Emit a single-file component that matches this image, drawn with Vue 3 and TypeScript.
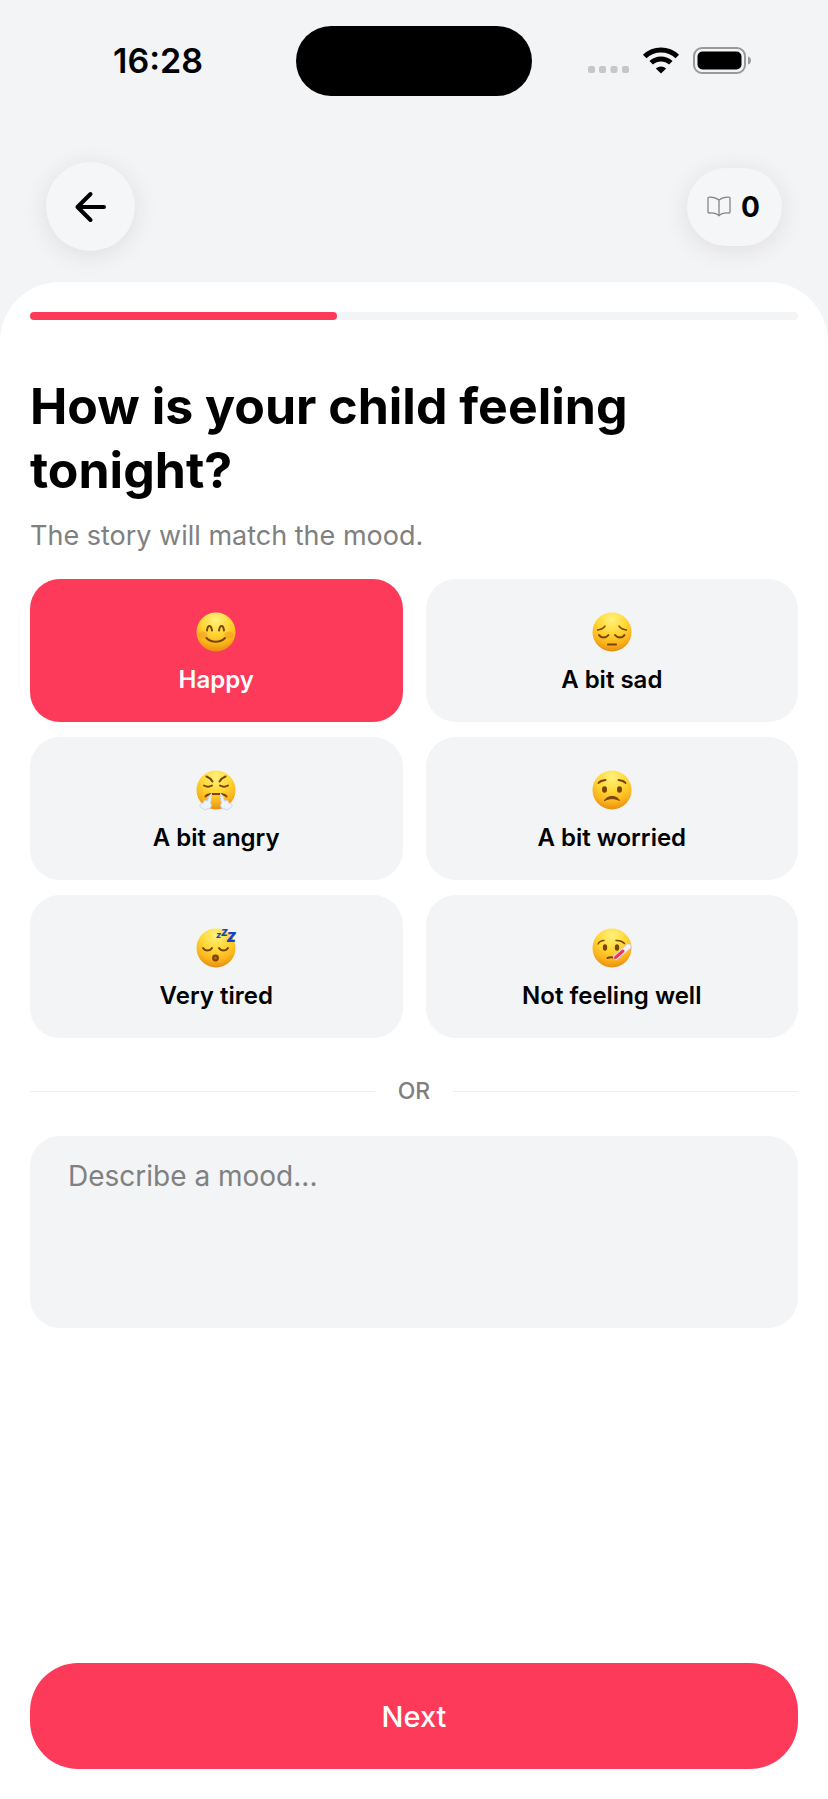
<script setup lang="ts">
import { ref } from 'vue'

type Face = 'happy' | 'sad' | 'angry' | 'worried' | 'tired' | 'sick'

interface Mood {
  id: Face
  label: string
}

const moods: Mood[] = [
  { id: 'happy', label: 'Happy' },
  { id: 'sad', label: 'A bit sad' },
  { id: 'angry', label: 'A bit angry' },
  { id: 'worried', label: 'A bit worried' },
  { id: 'tired', label: 'Very tired' },
  { id: 'sick', label: 'Not feeling well' },
]

const selected = ref<Face | null>('happy')
const description = ref('')
const progress = 40
const stories = 0
</script>

<template>
  <div class="screen">
    <div class="status">
      <div class="side"><span class="time">16:28</span></div>
      <div class="island"></div>
      <div class="side">
        <svg class="signals" width="166" height="30" viewBox="0 0 166 30" aria-hidden="true">
          <g fill="#c5c7c8">
            <rect x="2" y="20" width="7" height="7" rx="2" />
            <rect x="13" y="20" width="7" height="7" rx="2" />
            <rect x="24.500" y="20" width="7" height="7" rx="2" />
            <rect x="36" y="20" width="7" height="7" rx="2" />
          </g>
          <g fill="none" stroke="#000" stroke-width="5">
            <path d="M58.700 10.500a23.500 23.500 0 0 1 32.600 0" />
            <path d="M65.200 16.800a14.200 14.200 0 0 1 19.600 0" />
          </g>
          <path d="M69.800 22.500a7.500 7.500 0 0 1 10.400 0L75 27.500z" />
          <rect x="108" y="2" width="51" height="25" rx="8" fill="none" stroke="#98999a" stroke-width="2" />
          <rect x="111.500" y="5.500" width="44" height="18" rx="5" />
          <path d="M162 10.500c4 1 4 7 0 8z" fill="#98999a" />
        </svg>
      </div>
    </div>

    <header class="bar">
      <button class="back" type="button" aria-label="Back">
        <svg width="36" height="36" viewBox="0 0 36 36" fill="none" stroke="#000" stroke-width="4" stroke-linecap="round" stroke-linejoin="round">
          <path d="M17.500 5L4.500 18l13 13M5 18h26" />
        </svg>
      </button>
      <button class="count" type="button" aria-label="Stories">
        <svg width="24" height="22" viewBox="0 0 24 22" fill="none" stroke="#858585" stroke-width="1.300" stroke-linejoin="round" aria-hidden="true">
          <path d="M12 4C9.500 2 5.500 1 2 1.200Q1 1.200 1 2.200V16q0 1 1 1c4-.3 8 .5 10 2.700 2-2.200 6-3 10-2.700q1 0 1-1V2.200q0-1-1-1C18.500 1 14.500 2 12 4zM12 4v16" />
        </svg>
        <span>{{ stories }}</span>
      </button>
    </header>

    <main class="panel">
      <div class="track" role="progressbar" aria-label="Progress" :aria-valuenow="progress" aria-valuemin="0" aria-valuemax="100">
        <div class="fill" :style="{ width: progress + '%' }"></div>
      </div>

      <h1 id="question">How is your child feeling tonight?</h1>
      <p class="hint">The story will match the mood.</p>

      <div class="moods" role="group" aria-labelledby="question">
        <button
          v-for="mood in moods"
          :key="mood.id"
          type="button"
          class="mood"
          :class="{ active: selected === mood.id }"
          :aria-pressed="selected === mood.id"
          @click="selected = mood.id"
        >
          <svg class="face" width="40" height="40" viewBox="0 0 40 40" aria-hidden="true">
            <defs>
              <radialGradient :id="'skin-' + mood.id" cx="50%" cy="18%" r="84%">
                <stop offset="0" stop-color="#fff27c" />
                <stop offset="0.45" stop-color="#ffd634" />
                <stop offset="0.75" stop-color="#fbb41c" />
                <stop offset="1" stop-color="#e58a10" />
              </radialGradient>
            </defs>
            <circle cx="20" cy="20" r="19.500" :fill="`url(#skin-${mood.id})`" />

            <g v-if="mood.id === 'happy'" class="line">
              <ellipse cx="7" cy="23" rx="4.500" ry="3.500" fill="#f59322" opacity=".45" stroke="none" />
              <ellipse cx="33" cy="23" rx="4.500" ry="3.500" fill="#f59322" opacity=".45" stroke="none" />
              <path d="M11 18.500c.8-6 4-6 5 0M23 18.500c1-6 4.200-6 5 0" />
              <path d="M10.500 26c4.500 5 14 5 18.500 0" />
            </g>

            <g v-else-if="mood.id === 'sad'" class="line">
              <path d="M5.500 18q5-.5 7.500-4M27 14q2.500 3.500 7.500 4" stroke-width="1.400" />
              <path d="M7 23c2 3.300 7 3.300 9.500 0M23 23c2.500 3.300 7.500 3.300 9.500 0" />
              <path d="M16 32.500h8" />
            </g>

            <g v-else-if="mood.id === 'angry'">
              <g class="line">
                <path d="M10.500 6.500q4 1.500 6 5M29.500 6.500q-4 1.500-6 5" />
                <path d="M8 15.500q4 2.500 8 0M24 15.500q4 2.500 8 0" />
                <path d="M9.500 26.500q2-2.500 6-2.500h9q4 0 6 2.500" />
              </g>
              <path class="steam" d="M15.500 23.500Q13 25 11.500 31C8 29.500 7 32 7.500 33 3 33 3 38 6.500 38c1 2.500 4.500 2 5 .5 4 .5 4.500-3.500 3-5.500 1-3 .500-6 1-9.500z" />
              <path class="steam" d="M24.500 23.500Q27 25 28.500 31c3.500-1.500 4.500 1 4 2 4.500 0 4.500 5 1 5-1 2.500-4.500 2-5 .5-4 .5-4.500-3.500-3-5.500-1-3-.5-6-1-9.500z" />
            </g>

            <g v-else-if="mood.id === 'worried'" class="line">
              <path d="M6.500 13q2-2.500 7-3M26.500 10q5 .5 7 3" />
              <ellipse cx="12.500" cy="19.500" rx="1.500" ry="2.200" fill="#7a4408" />
              <ellipse cx="27.500" cy="19.500" rx="1.500" ry="2.200" fill="#7a4408" />
              <path d="M12.500 30.500c2.500-5.500 12.500-5.500 15 0-5-2.500-10-2.500-15 0z" fill="#7a4408" stroke-width="1" />
            </g>

            <g v-else-if="mood.id === 'tired'">
              <g class="line">
                <path d="M7 20c2 3.300 7 3.300 9 0M23 20c2 3.300 7 3.300 9 0" />
                <circle cx="19.500" cy="30" r="2.400" fill="#ab681a" />
              </g>
              <g class="zzz">
                <text x="20" y="10" font-size="9">z</text>
                <text x="25" y="7.500" font-size="12">z</text>
                <text x="30.500" y="13.500" font-size="17">z</text>
              </g>
            </g>

            <g v-else>
              <g class="line">
                <path d="M6 16q2-3.500 6-3.500M24 12.500q5-.5 8.500 3" stroke-width="1.400" />
                <ellipse cx="13" cy="19.500" rx="1.200" ry="2.300" fill="#7a4408" />
                <ellipse cx="25" cy="19.500" rx="1.200" ry="2.300" fill="#7a4408" />
                <path d="M15.500 30q3.500-1.500 8 0" />
              </g>
              <g fill="none" stroke-linecap="round">
                <path d="M24 29L36.500 18.500" stroke="#c9c9d2" stroke-width="6" />
                <path d="M24 29L36.500 18.500" stroke="#f1f1f5" stroke-width="4.500" />
                <path d="M23.500 29.500L31 23" stroke="#f3354f" stroke-width="3" />
              </g>
            </g>
          </svg>
          <span class="label">{{ mood.label }}</span>
        </button>
      </div>

      <div class="or"><span>OR</span></div>

      <textarea v-model="description" class="describe" aria-label="Describe a mood" placeholder="Describe a mood..."></textarea>

      <button class="next" type="button">Next</button>
    </main>
  </div>
</template>

<style>
body {
  margin: 0;
  background: #f3f4f6;
}
</style>

<style scoped>
.screen {
  box-sizing: border-box;
  min-height: 100vh;
  display: flex;
  flex-direction: column;
  background: #f3f4f6;
  color: #000;
  font-family: Inter, "Liberation Sans", sans-serif;
}

button {
  font: inherit;
  color: inherit;
  border: 0;
  margin: 0;
  padding: 0;
  cursor: pointer;
}

.status {
  display: grid;
  grid-template-columns: 1fr auto 1fr;
  align-items: center;
  padding-top: 26px;
}

.side {
  display: flex;
  justify-content: center;
  padding-left: 20px;
}

.side:last-child {
  padding: 0 22px 0 0;
}

.time {
  font-size: 34px;
  line-height: 40px;
  font-weight: 600;
}

.island {
  width: 236px;
  height: 70px;
  border-radius: 35px;
  background: #000;
}

.signals,
.face {
  display: block;
  overflow: visible;
}

.bar {
  display: flex;
  align-items: center;
  justify-content: space-between;
  padding: 66px 46px 31px;
}

.back,
.count {
  display: flex;
  align-items: center;
  justify-content: center;
  background: #f5f6f8;
  box-shadow: 0 4px 24px rgba(60, 40, 20, 0.1);
}

.back {
  width: 89px;
  height: 89px;
  border-radius: 50%;
}

.count {
  gap: 10px;
  height: 78px;
  padding: 0 22px 0 20px;
  border-radius: 39px;
  font-size: 28px;
  font-weight: 700;
}

.panel {
  flex: 1;
  display: flex;
  flex-direction: column;
  padding: 30px;
  border-radius: 60px 60px 0 0;
  background: #fff;
}

.track {
  height: 8px;
  border-radius: 4px;
  background: #f3f4f6;
}

.fill {
  height: 100%;
  border-radius: 4px;
  background: #fe3a5a;
}

h1 {
  margin: 54px 0 0;
  font-size: 50px;
  line-height: 64px;
  font-weight: 700;
}

.hint {
  margin: 17px 0 0;
  font-size: 27px;
  line-height: 34px;
  color: #808080;
}

.moods {
  display: grid;
  grid-template-columns: 1fr 1fr;
  gap: 15px 23px;
  margin-top: 26px;
}

.mood {
  display: flex;
  flex-direction: column;
  align-items: center;
  gap: 13px;
  padding: 33px 12px 27px;
  border-radius: 30px;
  background: #f3f4f6;
  font-size: 24px;
  line-height: 30px;
  font-weight: 600;
}

.mood.active {
  background: #fe3a5a;
  color: #fff;
}

.line {
  fill: none;
  stroke: #7a4408;
  stroke-width: 2;
  stroke-linecap: round;
  stroke-linejoin: round;
}

.steam {
  fill: #edf4fd;
  stroke: #c3d8f2;
  stroke-width: 1;
}

.zzz {
  fill: #1744c4;
  font-family: Inter, sans-serif;
  font-weight: 800;
  font-style: italic;
}

.or {
  display: flex;
  align-items: center;
  gap: 23px;
  margin: 38px 0 30px;
  font-size: 23px;
  line-height: 30px;
  font-weight: 500;
  color: #808080;
}

.or::before,
.or::after {
  content: "";
  flex: 1;
  height: 1px;
  background: #eeeff1;
}

.describe {
  box-sizing: border-box;
  display: block;
  width: 100%;
  height: 192px;
  margin: 0;
  padding: 23px 38px;
  border: 0;
  border-radius: 30px;
  background: #f3f4f6;
  color: #000;
  font: 28px/34px Inter, "Liberation Sans", sans-serif;
  resize: none;
}

.describe::placeholder {
  color: #808080;
  opacity: 1;
}

.next {
  height: 106px;
  margin-top: auto;
  border-radius: 48px;
  background: #fe3a5a;
  color: #fff;
  font-size: 29px;
  font-weight: 500;
}
</style>
